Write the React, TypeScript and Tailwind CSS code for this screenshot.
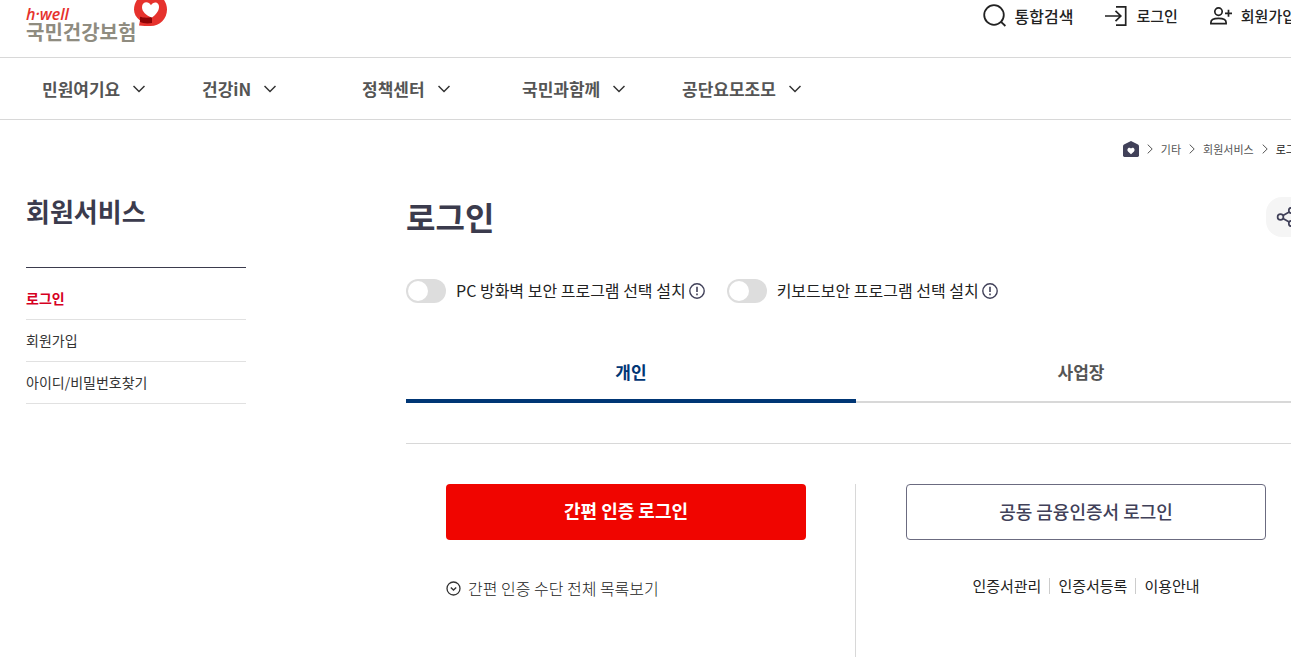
import React, { useState } from "react";

const MENUS = ["민원여기요", "건강iN", "정책센터", "국민과함께", "공단요모조모"];
const SIDE_LINKS = ["로그인", "회원가입", "아이디/비밀번호찾기"];
const CERT_LINKS = ["인증서관리", "인증서등록", "이용안내"];
const TABS = ["개인", "사업장"];
const PROGRAMS = [
  { id: "firewall", label: "PC 방화벽 보안 프로그램 선택 설치" },
  { id: "keyboard", label: "키보드보안 프로그램 선택 설치" },
];

function SearchIcon() {
  return (
    <svg width="24" height="24" viewBox="0 0 24 24" fill="none" stroke="#222" strokeWidth="1.8" aria-hidden="true">
      <circle cx="11" cy="11" r="9.8" />
      <path d="M17.8 17.6 22.4 22" />
    </svg>
  );
}

function LoginIcon() {
  return (
    <svg width="22" height="20" viewBox="0 0 22 20" fill="none" stroke="#222" strokeWidth="1.7" aria-hidden="true">
      <path d="M11 .9h9.700v18.200H11M0 10h15.500M10.500 4.800l5.300 5.200-5.300 5.200" />
    </svg>
  );
}

function JoinIcon() {
  return (
    <svg width="22" height="18" viewBox="0 0 22 18" fill="none" stroke="#222" strokeWidth="1.7" aria-hidden="true">
      <circle cx="8.500" cy="4.600" r="3.700" />
      <path d="M.9 16.600v-1.200c0-3 2.800-4 7.600-4s7.600 1 7.600 4v1.200zM18.500 2.800v7M15 6.300h7" />
    </svg>
  );
}

function ChevronDown() {
  return (
    <svg width="12" height="8" viewBox="0 0 12 8" fill="none" stroke="#333" strokeWidth="1.5" aria-hidden="true">
      <path d="M.5 1 6 6.500 11.500 1" />
    </svg>
  );
}

function ChevronRight() {
  return (
    <svg width="6" height="10" viewBox="0 0 6 10" fill="none" stroke="#555" strokeWidth="1" aria-hidden="true">
      <path d="M.7.6 5.200 5 .7 9.400" />
    </svg>
  );
}

function HomeIcon() {
  return (
    <svg width="16" height="16" viewBox="0 0 16 16" aria-hidden="true">
      <path fill="#414159" d="M8 0 15 3.400q1 .6 1 1.800V14.600Q16 16 14.600 16H1.400Q0 16 0 14.600V5.200Q0 4 1 3.400z" />
      <path fill="#fff" d="M8 13.200 5 10.400C3.200 8.400 6 5.400 8 7.500c2-2.100 4.800.9 3 2.900z" />
    </svg>
  );
}

function InfoIcon() {
  return (
    <svg width="16" height="16" viewBox="0 0 16 16" fill="none" stroke="#414159" strokeWidth="1.4" aria-hidden="true">
      <circle cx="8" cy="8" r="7.2" />
      <path d="M8 3.800v5.200M8 10.600v1.600" strokeWidth="1.6" />
    </svg>
  );
}

function ShareIcon() {
  return (
    <svg width="20" height="20" viewBox="0 0 20 20" fill="none" stroke="#414159" strokeWidth="1.7" aria-hidden="true">
      <circle cx="4.500" cy="10" r="2.900" />
      <circle cx="15.500" cy="3.500" r="2.700" />
      <circle cx="15.500" cy="16.500" r="2.700" />
      <path d="M7 8.500 13.200 4.900M7 11.500l6.200 3.600" />
    </svg>
  );
}

function CircleDownIcon() {
  return (
    <svg width="15" height="15" viewBox="0 0 15 15" fill="none" stroke="#333" strokeWidth="1.3" aria-hidden="true">
      <circle cx="7.500" cy="7.500" r="6.500" />
      <path d="M4.800 6.500 7.500 9 10.200 6.500" strokeWidth="1.4" />
    </svg>
  );
}

function LogoMark() {
  return (
    <svg width="33" height="27" viewBox="0 0 33 27" aria-hidden="true">
      <path fill="#e6322d" d="M16.500-7C26-7 33 .5 33 9.500S26 26 16.500 26q-6 0-11.500-.5L6 20.500C2 17.500 0 13.500 0 9.500 0 .5 7-7 16.500-7z" />
      <path fill="#8e0305" d="M6 16.800c3 1 8 1.200 12 .2v6c-4 .8-9 .6-12-1.200z" />
      <path fill="#fff" d="M18 17.500C12 15.500 8 11.500 8 7.200c0-5.700 6.500-6.500 9-2C19.500 1 25.500 2 25 7.500c-.4 4-3.500 7.500-7 10z" />
    </svg>
  );
}

export default function App() {
  const [tab, setTab] = useState(0);

  return (
    <div className="flex min-h-screen min-w-[1332px] flex-col bg-white font-['Noto_Sans_CJK_KR','Noto_Sans',sans-serif] text-[#222]">
      <header className="flex h-[58px] items-start justify-between border-b border-[#d8d8d8] px-[26px]">
        <a href="#" className="flex items-start">
          <span className="flex w-[108px] flex-col pt-2">
            <span className="font-['Open_Sans','Noto_Sans',sans-serif] text-base leading-3 font-semibold text-[#e6322d] italic">h·well</span>
            <span className="text-xl leading-6 font-bold whitespace-nowrap text-[#8f8c80]">국민건강보험</span>
          </span>
          <LogoMark />
        </a>
        <div className="flex h-8 items-center gap-8 pr-[10px] font-medium">
          <button type="button" className="flex items-center gap-2 text-base leading-6">
            <SearchIcon />
            통합검색
          </button>
          <a href="#" className="flex items-center gap-[9px] text-[15px] leading-6">
            <LoginIcon />
            로그인
          </a>
          <a href="#" className="flex items-center gap-[9px] text-[15px] leading-6">
            <JoinIcon />
            회원가입
          </a>
        </div>
      </header>

      <nav className="flex h-[62px] border-b border-[#d8d8d8] px-[42px]" aria-label="주메뉴">
        {MENUS.map((menu) => (
          <button key={menu} type="button" className="flex w-40 items-center gap-[13px] text-[17px] font-bold text-[#555]">
            {menu}
            <ChevronDown />
          </button>
        ))}
      </nav>

      <nav className="flex h-[58px] items-center justify-end gap-2 px-[26px] text-[11px] text-[#555]" aria-label="현재 위치">
        <a href="#" aria-label="홈">
          <HomeIcon />
        </a>
        <ChevronRight />
        <a href="#">기타</a>
        <ChevronRight />
        <a href="#">회원서비스</a>
        <ChevronRight />
        <span className="text-[#222]">로그인</span>
      </nav>

      <div className="flex flex-1 px-[26px]">
        <aside className="mr-40 w-[220px] shrink-0">
          <h2 className="pt-[15px] pb-[38px] text-[26px] leading-9 font-bold text-[#3b3b4d]">회원서비스</h2>
          <ul className="border-t border-[#3b3b4d] pt-[10px] text-sm text-[#333]">
            {SIDE_LINKS.map((link, i) => (
              <li key={link} className="border-b border-[#e1e1e1]">
                <a href="#" className={i === 0 ? "block leading-[41px] font-bold text-[#d6001f]" : "block leading-[41px]"}>
                  {link}
                </a>
              </li>
            ))}
          </ul>
        </aside>

        <main className="flex flex-1 flex-col">
          <div className="flex items-start justify-between pt-[19px]">
            <h1 className="text-[32px] leading-[38px] font-bold text-[#3b3b4d]">로그인</h1>
            <button type="button" aria-label="공유" className="flex size-10 items-center justify-center rounded-2xl bg-[#f5f5f5]">
              <ShareIcon />
            </button>
          </div>

          <div className="flex gap-[22px] pt-[42px]">
            {PROGRAMS.map((program) => (
              <div key={program.id} className="flex h-6 items-center">
                <input
                  id={program.id}
                  type="checkbox"
                  role="switch"
                  className="h-6 w-10 appearance-none rounded-full bg-[#ddd] p-[2px] before:block before:size-5 before:rounded-full before:bg-white checked:bg-[#003675] checked:before:ml-4"
                />
                <label htmlFor={program.id} className="pr-[3px] pb-[2px] pl-[10px] text-base">
                  {program.label}
                </label>
                <button type="button" aria-label="안내">
                  <InfoIcon />
                </button>
              </div>
            ))}
          </div>

          <div role="tablist" className="mt-[38px] grid grid-cols-2">
            {TABS.map((name, i) => (
              <button
                key={name}
                type="button"
                role="tab"
                aria-selected={tab === i}
                onClick={() => setTab(i)}
                className={
                  tab === i
                    ? "flex h-[62px] items-center justify-center border-b-4 border-[#003675] pt-1 text-[17px] font-bold text-[#003675]"
                    : "flex h-[62px] items-center justify-center border-b-2 border-[#d8d8d8] pt-[2px] text-[17px] font-bold text-[#555]"
                }
              >
                {name}
              </button>
            ))}
          </div>

          <div className="mt-10 grid flex-1 grid-cols-2 border-t border-[#d8d8d8] pt-10">
            <section className="border-r border-[#d8d8d8] pr-[49px] pl-10">
              <button type="button" className="h-14 w-full rounded bg-[#f00500] pb-1 text-lg font-bold text-white">
                간편 인증 로그인
              </button>
              <button type="button" className="mt-9 flex items-center gap-[7px] text-base font-light">
                <CircleDownIcon />
                간편 인증 수단 전체 목록보기
              </button>
            </section>
            <section className="pr-10 pl-[50px]">
              <button type="button" className="h-14 w-full rounded border border-[#6b6b80] pb-[2px] text-lg font-medium text-[#414159]">
                공동 금융인증서 로그인
              </button>
              <ul className="mt-[34px] flex items-center justify-center text-[15px] leading-6">
                {CERT_LINKS.map((link, i) => (
                  <li key={link} className="flex items-center">
                    {i > 0 && <span className="mx-2 h-4 w-px bg-[#ccc]" />}
                    <a href="#">{link}</a>
                  </li>
                ))}
              </ul>
            </section>
          </div>
        </main>
      </div>
    </div>
  );
}
